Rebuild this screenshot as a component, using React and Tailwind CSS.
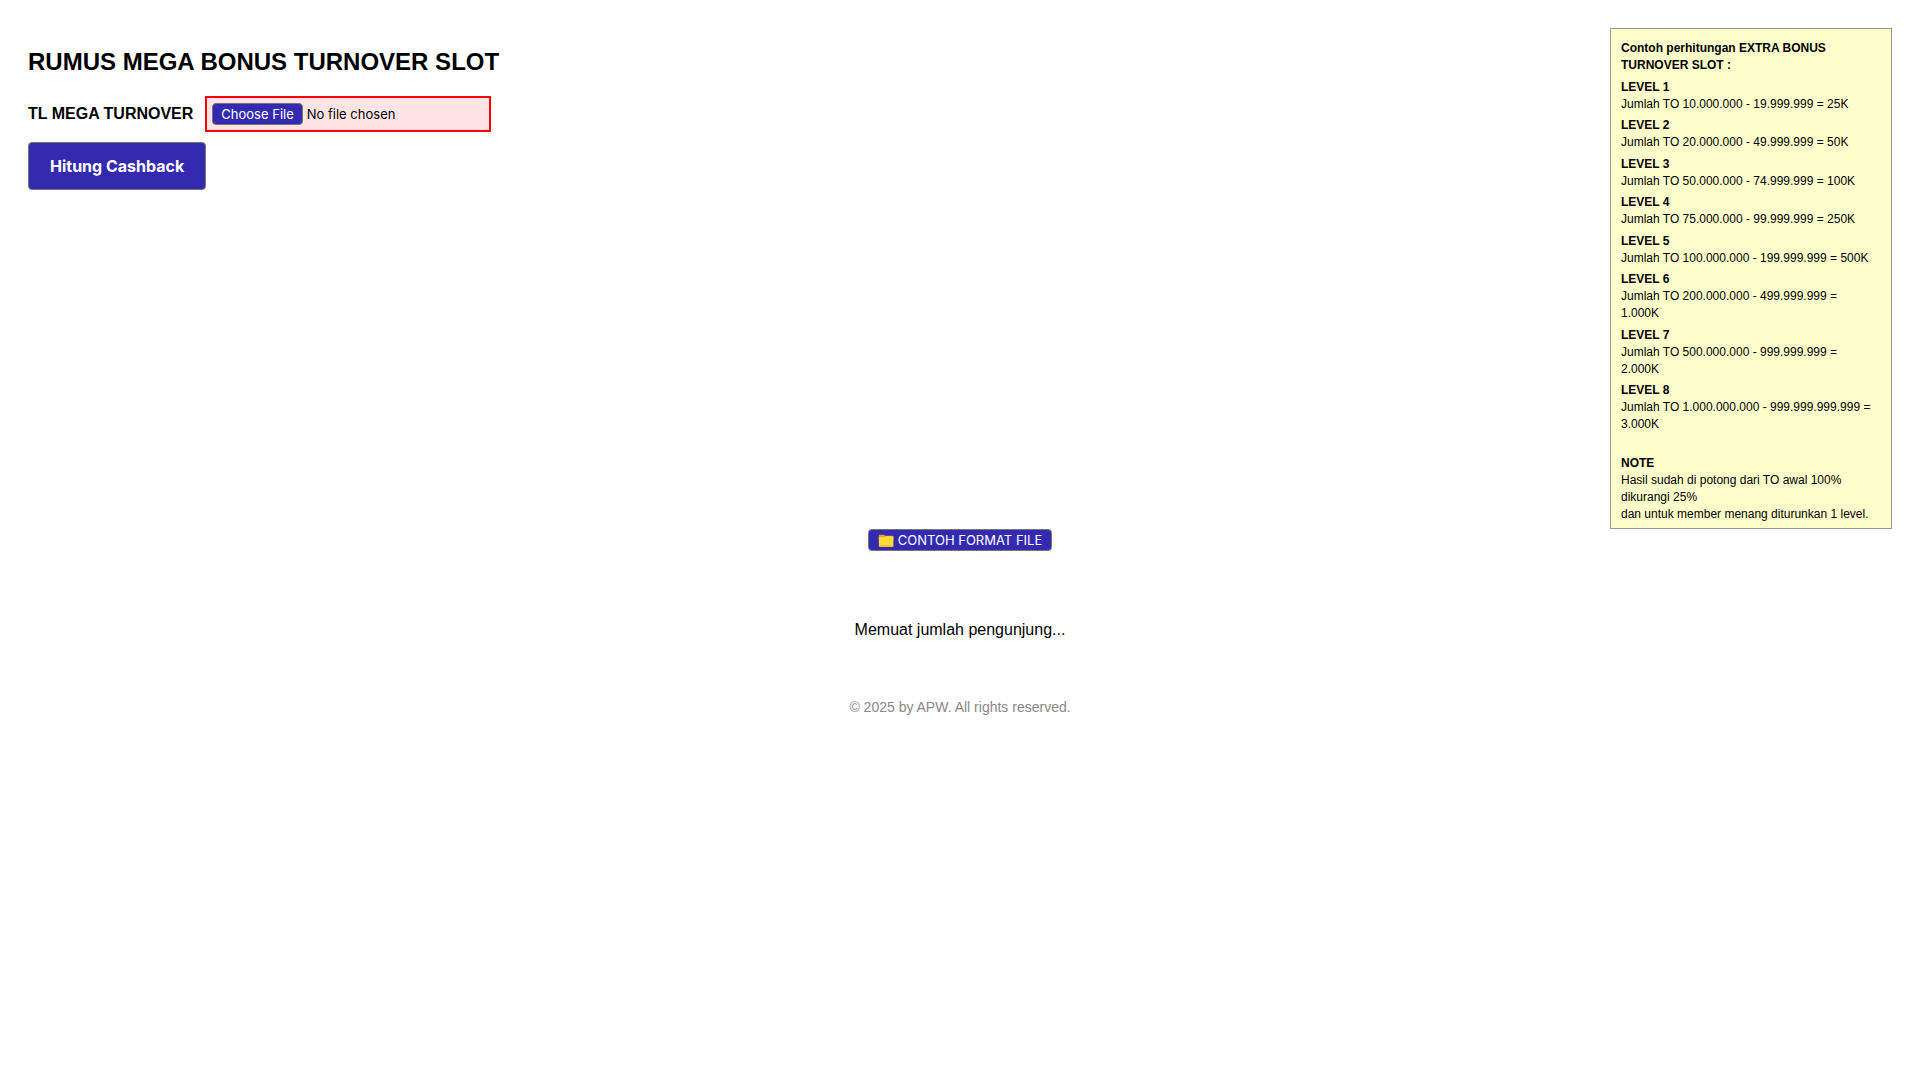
import React, { useState } from 'react';

const niveles = [
  { nombre: 'LEVEL 1', detalle: 'Jumlah TO 10.000.000 - 19.999.999 = 25K' },
  { nombre: 'LEVEL 2', detalle: 'Jumlah TO 20.000.000 - 49.999.999 = 50K' },
  { nombre: 'LEVEL 3', detalle: 'Jumlah TO 50.000.000 - 74.999.999 = 100K' },
  { nombre: 'LEVEL 4', detalle: 'Jumlah TO 75.000.000 - 99.999.999 = 250K' },
  { nombre: 'LEVEL 5', detalle: 'Jumlah TO 100.000.000 - 199.999.999 = 500K' },
  { nombre: 'LEVEL 6', detalle: 'Jumlah TO 200.000.000 - 499.999.999 = 1.000K' },
  { nombre: 'LEVEL 7', detalle: 'Jumlah TO 500.000.000 - 999.999.999 = 2.000K' },
  { nombre: 'LEVEL 8', detalle: 'Jumlah TO 1.000.000.000 - 999.999.999.999 = 3.000K' },
];

function FolderIcon() {
  return (
    <svg viewBox="0 0 16 16" className="w-4 h-4 shrink-0" aria-hidden="true">
      <path d="M.8 3.6c0-.5.3-.8.8-.8h4c.4 0 .7.1 1 .4l.5.5h7.2c.5 0 .8.3.8.8v3H.8z" fill="#f0a01c" />
      <path d="M.8 5.6c0-.4.2-.6.6-.6h4.4c.5 0 .8-.1 1.1-.3l.5-.3c.2-.1.4-.2.7-.2h7c.3 0 .5.2.5.5l-.3 9.2c0 .5-.3.8-.8.8H1.7c-.5 0-.8-.3-.8-.8z" fill="#ffd83a" />
      <path d="M.9 13h14.5v.9c0 .5-.4.8-.9.8H1.7c-.5 0-.8-.3-.8-.8z" fill="#fbc02d" />
    </svg>
  );
}

function PanelContoh() {
  return (
    <aside className="w-[282px] shrink-0 border border-[#999] bg-[#ffffcc] pl-[10px] pr-4 pt-[11px] pb-[5px] text-xs/[17px]">
      <p className="font-bold mb-[5px]">Contoh perhitungan EXTRA BONUS TURNOVER SLOT :</p>
      {niveles.map((nivel) => (
        <p key={nivel.nombre} className="even:mb-1 odd:mb-[5px]">
          <strong className="block">{nivel.nombre}</strong>
          {nivel.detalle}
        </p>
      ))}
      <p className="mt-[22px]">
        <strong className="block">NOTE</strong>
        Hasil sudah di potong dari TO awal 100% dikurangi 25%
        <br />
        dan untuk member menang diturunkan 1 level.
      </p>
    </aside>
  );
}

export default function App() {
  const [archivo, setArchivo] = useState(null);

  return (
    <div className="min-h-screen bg-white p-7 text-black font-['Liberation_Sans',Arial,sans-serif]">
      <div className="flex items-start justify-between">
        <form className="pt-5" onSubmit={(e) => e.preventDefault()}>
          <h1 className="text-2xl/[28px] font-bold">RUMUS MEGA BONUS TURNOVER SLOT</h1>

          <div className="mt-5 flex items-center">
            <label htmlFor="archivo" className="text-base font-bold">TL MEGA TURNOVER</label>
            <input
              id="archivo"
              type="file"
              onChange={(e) => setArchivo(e.target.files[0])}
              className={`ml-3 w-[286px] border-2 p-[5px] font-['Inter',sans-serif] text-[13px]/[20px] file:rounded file:border file:border-solid file:border-[#767676] file:bg-[#342ab0] file:px-2 file:text-white
                ${archivo ? 'border-green-600 bg-green-50' : 'border-[#ff0000] bg-[#ffe4e6]'}
              `}
            />
          </div>

          <button
            type="submit"
            className="mt-[10px] h-12 rounded border border-[#767676] bg-[#342ab0] px-[21px] font-['Inter',sans-serif] text-base font-bold text-white hover:brightness-110"
          >
            Hitung Cashback
          </button>
        </form>

        <PanelContoh />
      </div>

      <div className="flex flex-col items-center">
        <button
          type="button"
          className="flex items-center gap-1 rounded border border-[#767676] bg-[#342ab0] px-[9px] font-['Inter',sans-serif] text-[13px]/[20px] text-white hover:brightness-110"
        >
          <FolderIcon />
          CONTOH FORMAT FILE
        </button>

        <p className="mt-[69px] text-base/[20px]">Memuat jumlah pengunjung...</p>
        <footer className="mt-[57px] text-sm/[20px] text-[#888]">© 2025 by APW. All rights reserved.</footer>
      </div>
    </div>
  );
}
